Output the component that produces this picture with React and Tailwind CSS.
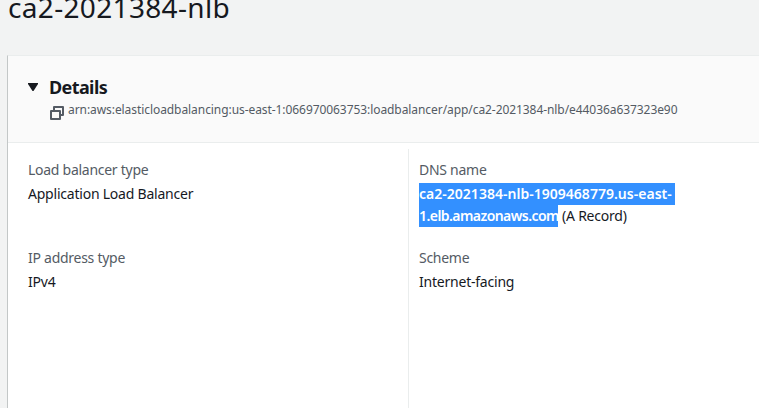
function Field({ label, children }) {
  return (
    <div className="text-sm leading-[22px] tracking-[-0.22px]">
      <div className="mb-0.5 tracking-[-0.27px] text-[#545b64]">{label}</div>
      <div className="text-[#16191f]">{children}</div>
    </div>
  );
}

function CopyIcon() {
  return (
    <svg className="mt-1 h-[14px] w-[14px] shrink-0" viewBox="0 0 14 14" fill="none" stroke="#545b64" strokeWidth="2" strokeLinejoin="round">
      <path d="M1 5H10V13H1Z" />
      <path d="M4 5V1H13V9H10" />
    </svg>
  );
}

export default function App() {
  return (
    <div className="flex h-[408px] w-[759px] flex-col overflow-hidden bg-[#f2f3f3] font-['Noto_Sans',sans-serif] whitespace-nowrap text-[#16191f]">
      <h1 className="-mt-[11px] mb-[30px] h-9 pl-2 text-[28px] leading-9 tracking-[0.33px]">
        <span>ca2-2021384-nlb</span>
      </h1>
      <section className="ml-[7px] flex flex-1 flex-col border-t border-l border-t-[#eaeded] border-l-[#c3c7c7] bg-white">
        <header className="h-[87px] shrink-0 border-b border-[#eaeded] bg-[#fafafa] pt-5 pl-5">
          <div className="flex items-center">
            <svg className="mr-[11px] h-2 w-[10px]" viewBox="0 0 10 8" fill="#16191f">
              <path d="M0 0H10V1L5.5 8H4.5L0 1Z" />
            </svg>
            <h2 className="text-lg leading-[22px] font-bold tracking-[-0.6px]">
              <span>Details</span>
            </h2>
          </div>
          <div className="flex pl-[22px] text-xs leading-6 tracking-[-0.07px] text-[#545b64]">
            <div className="mt-[4px] flex"><CopyIcon /></div>
            <span className="ml-1">arn:aws:elasticloadbalancing:us-east-1:066970063753:loadbalancer/app/ca2-2021384-nlb/e44036a637323e90</span>
          </div>
        </header>
        <div className="flex flex-1 pt-[6px]">
          <div className="flex w-[400px] flex-col gap-[42px] pt-[10px] pl-5">
            <Field label={<span>Load balancer type</span>}>
              <span>Application Load Balancer</span>
            </Field>
            <Field label={<span>IP address type</span>}>
              <span>IPv4</span>
            </Field>
          </div>
          <div className="flex flex-1 flex-col gap-5 border-l border-[#eaeded] pt-[10px] pl-[10px]">
            <Field label={<span>DNS name</span>}>
              <div className="flex">
                <span className="h-[22px] w-[256px] bg-[#3390ff] font-semibold tracking-[0.02px] text-white">ca2-2021384-nlb-1909468779.us-east-</span>
              </div>
              <div className="flex gap-1">
                <span className="h-[22px] w-[139px] bg-[#3390ff] font-semibold tracking-[-0.56px] text-white">1.elb.amazonaws.com</span>
                <span>(A Record)</span>
              </div>
            </Field>
            <Field label={<span>Scheme</span>}>
              <span>Internet-facing</span>
            </Field>
          </div>
        </div>
      </section>
    </div>
  );
}
